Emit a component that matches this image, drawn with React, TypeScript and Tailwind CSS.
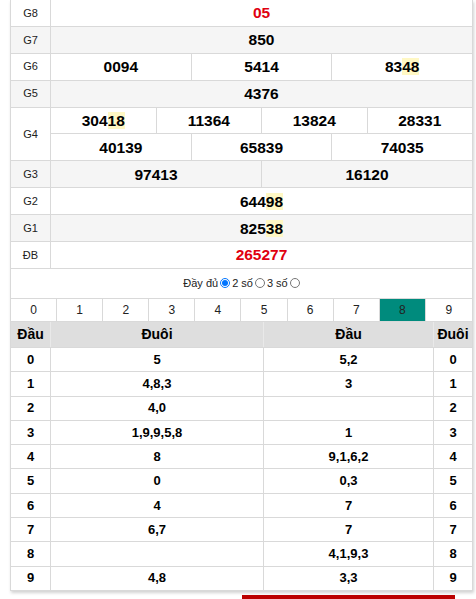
import { FunctionComponent, ReactNode } from "react";

const font = { fontFamily: '"Liberation Sans", Arial, sans-serif' };

type Prize = {
  label: string;
  rows: ReactNode[][];
  gray?: boolean;
  red?: boolean;
};

const Hl: FunctionComponent<{ children: ReactNode }> = ({ children }) => (
  <span className="bg-[#fff8c4]">{children}</span>
);

const prizes: Prize[] = [
  { label: "G8", rows: [["05"]], red: true },
  { label: "G7", rows: [["850"]], gray: true },
  {
    label: "G6",
    rows: [
      [
        "0094",
        "5414",
        <>
          83<Hl>48</Hl>
        </>,
      ],
    ],
  },
  { label: "G5", rows: [["4376"]], gray: true },
  {
    label: "G4",
    rows: [
      [
        <>
          304<Hl>18</Hl>
        </>,
        "11364",
        "13824",
        "28331",
      ],
      ["40139", "65839", "74035"],
    ],
  },
  { label: "G3", rows: [["97413", "16120"]], gray: true },
  {
    label: "G2",
    rows: [
      [
        <>
          644<Hl>98</Hl>
        </>,
      ],
    ],
  },
  {
    label: "G1",
    rows: [
      [
        <>
          825<Hl>38</Hl>
        </>,
      ],
    ],
    gray: true,
  },
  { label: "ĐB", rows: [["265277"]], red: true },
];

const loto: [string, string, string, string][] = [
  ["0", "5", "5,2", "0"],
  ["1", "4,8,3", "3", "1"],
  ["2", "4,0", "", "2"],
  ["3", "1,9,9,5,8", "1", "3"],
  ["4", "8", "9,1,6,2", "4"],
  ["5", "0", "0,3", "5"],
  ["6", "4", "7", "6"],
  ["7", "6,7", "7", "7"],
  ["8", "", "4,1,9,3", "8"],
  ["9", "4,8", "3,3", "9"],
];

const PrizeRow: FunctionComponent<Prize> = ({ label, rows, gray, red }) => (
  <div className={`flex border-b border-[#d9d9d9] ${gray ? "bg-[#f5f5f5]" : "bg-white"}`}>
    <div className="flex w-[40px] shrink-0 items-center justify-center border-r border-[#d9d9d9] text-[11px] text-[#222]">
      {label}
    </div>
    <div className="flex flex-1 flex-col">
      {rows.map((cells, i) => (
        <div
          key={i}
          className={`flex ${i < rows.length - 1 ? "h-[26.9px] border-b border-[#d9d9d9]" : "h-[25.9px]"}`}
        >
          {cells.map((c, j) => (
            <div
              key={j}
              className={`flex flex-1 items-center justify-center text-[15.5px] font-bold ${
                red ? "text-[#e0000f]" : "text-black"
              } ${j < cells.length - 1 ? "border-r border-[#d9d9d9]" : ""}`}
            >
              <span className="leading-[17px]">{c}</span>
            </div>
          ))}
        </div>
      ))}
    </div>
  </div>
);

export default function App() {
  return (
    <div className="min-h-screen bg-white pl-[10px]" style={font}>
      <div className="w-[463px] border-x border-[#d9d9d9] bg-white shadow-[1px_2px_3px_rgba(0,0,0,0.18)]">
        {prizes.map((p) => (
          <PrizeRow key={p.label} {...p} />
        ))}

        <div className="flex h-[29px] items-center justify-center gap-[2px] text-[11px] text-[#222]">
          <span>Đầy đủ</span>
          <input type="radio" name="mode" defaultChecked className="m-0 h-[10px] w-[10px]" />
          <span>2 số</span>
          <input type="radio" name="mode" className="m-0 h-[10px] w-[10px]" />
          <span>3 số</span>
          <input type="radio" name="mode" className="m-0 h-[10px] w-[10px]" />
        </div>

        <div className="grid h-[24px] grid-cols-10 border-y border-[#d9d9d9] text-[12px] text-[#222]">
          {Array.from({ length: 10 }, (_, i) => (
            <div
              key={i}
              className={`flex items-center justify-center ${i < 9 ? "border-r border-[#d9d9d9]" : ""} ${
                i === 8 ? "bg-[#008b7d]" : "bg-white"
              }`}
            >
              {i}
            </div>
          ))}
        </div>

        <div className="grid h-[26px] grid-cols-[40px_213px_170px_1fr] border-b border-[#d9d9d9] bg-[#dedede] text-[14px] font-bold text-black">
          <div className="flex items-center justify-center border-r border-[#e9e9e9]">Đầu</div>
          <div className="flex items-center justify-center border-r border-[#e9e9e9]">Đuôi</div>
          <div className="flex items-center justify-center border-r border-[#e9e9e9]">Đầu</div>
          <div className="flex items-center justify-center">Đuôi</div>
        </div>

        {loto.map((r) => (
          <div
            key={r[0]}
            className="grid h-[24.3px] grid-cols-[40px_213px_170px_1fr] border-b border-[#d9d9d9] text-[13px] font-bold text-black"
          >
            <div className="flex items-center justify-center border-r border-[#d9d9d9]">{r[0]}</div>
            <div className="flex items-center justify-center border-r border-[#d9d9d9]">{r[1]}</div>
            <div className="flex items-center justify-center border-r border-[#d9d9d9]">{r[2]}</div>
            <div className="flex items-center justify-center">{r[3]}</div>
          </div>
        ))}
      </div>

      <div className="ml-[232px] mt-[4px] h-[10px] w-[213px] bg-[#bb0000]" />
    </div>
  );
}
